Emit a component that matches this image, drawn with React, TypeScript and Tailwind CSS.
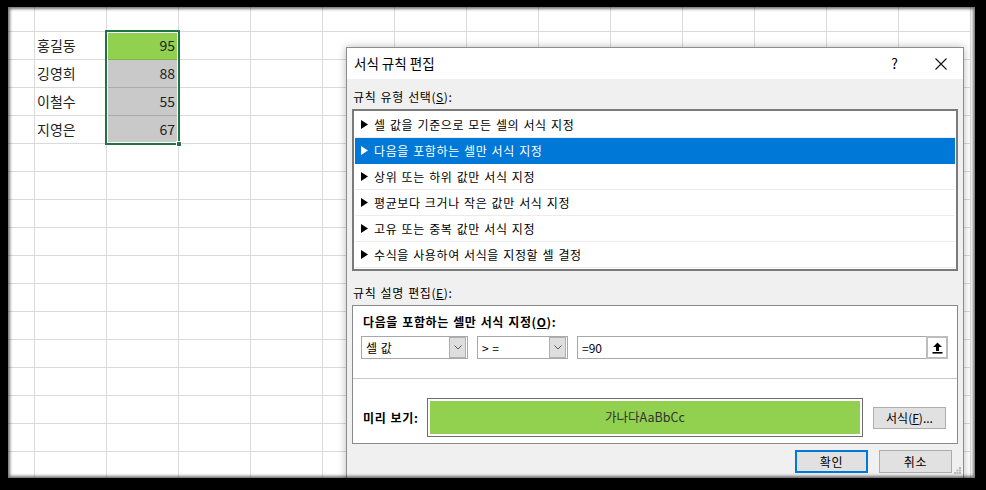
const ROWS = 17;
const COLS = 14;

const people = [
  { name: "홍길동", score: 95, hit: true },
  { name: "깅영희", score: 88, hit: false },
  { name: "이철수", score: 55, hit: false },
  { name: "지영은", score: 67, hit: false },
];

const ruleTypes = [
  "셀 값을 기준으로 모든 셀의 서식 지정",
  "다음을 포함하는 셀만 서식 지정",
  "상위 또는 하위 값만 서식 지정",
  "평균보다 크거나 작은 값만 서식 지정",
  "고유 또는 중복 값만 서식 지정",
  "수식을 사용하여 서식을 지정할 셀 결정",
];

function Chevron() {
  return (
    <svg width="8" height="5" viewBox="0 0 8 5">
      <path d="M0.5 0.5 L4 4 L7.5 0.5" fill="none" stroke="#5a5a5a" strokeWidth="1" />
    </svg>
  );
}

function Combo({ label, width }: { label: string; width: string }) {
  return (
    <div className={`${width} h-[23px] bg-white border border-[#a8a8a8] flex items-center`}>
      <span className="flex-1 pl-[4px] text-[12px] leading-none">{label}</span>
      <span className="w-[17px] h-[21px] mr-px bg-[#dedede] border border-[#b0b0b0] flex items-center justify-center">
        <Chevron />
      </span>
    </div>
  );
}

function Sheet() {
  const cells = [];
  for (let r = 0; r < ROWS; r++) {
    for (let c = 0; c < COLS; c++) {
      const p = r >= 1 && r <= 4 ? people[r - 1] : null;
      let content = null;
      let bg = "";
      if (p && c === 1) {
        content = <span className="pl-[2px]">{p.name}</span>;
      }
      if (p && c === 2) {
        content = <span className="ml-auto pr-[3px]">{p.score}</span>;
        bg = p.hit ? "bg-[#92d050] border-b-[#7fb443]" : "bg-[#c9c9c9] border-b-[#ababab]";
      }
      cells.push(
        <div
          key={r + "-" + c}
          className={`border-r border-b border-[#dadada] flex items-center text-[14px] text-[#222] ${bg}`}
        >
          {content}
        </div>
      );
    }
  }
  return (
    <div className="grid grid-cols-[27px_repeat(13,72px)] grid-rows-[25px_repeat(16,28px)]">
      {cells}
    </div>
  );
}

function Dialog() {
  return (
    <div className="absolute left-[338px] top-[40px] w-[618px] h-[460px] bg-[#f0f0f0] border border-[#8c8c8c] shadow-[0_0_8px_rgba(0,0,0,0.28)] text-black">
      <div className="h-[31px] bg-white flex items-center pl-[7px]">
        <span className="text-[13.5px]">서식 규칙 편집</span>
        <span className="ml-auto text-[14px] mr-[37px]">?</span>
        <svg width="12" height="12" viewBox="0 0 12 12" className="mr-[16px]">
          <path d="M0.5 0.5 L11.5 11.5 M11.5 0.5 L0.5 11.5" stroke="#111" strokeWidth="1.1" />
        </svg>
      </div>
      <div className="px-[5px] text-[12px] tracking-[0.6px] [word-spacing:1px]">
        <div className="mt-[10px] leading-[16px] pl-px">
          규칙 유형 선택(<span className="underline">S</span>):
        </div>
        <div className="mt-[4px] border-2 border-[#7a7a7a] bg-white p-px">
          {ruleTypes.map((t, i) => (
            <div
              key={t}
              className={`h-[26px] flex items-center pl-[6px] border-b ${
                i === 1 ? "bg-[#0078d7] text-white border-[#0078d7]" : "border-[#ececec]"
              }`}
            >
              <svg width="7" height="9" viewBox="0 0 7 9" className="mr-[6px]">
                <polygon points="0,0 7,4.5 0,9" fill={i === 1 ? "#fff" : "#000"} />
              </svg>
              <span>{t}</span>
            </div>
          ))}
        </div>
        <div className="mt-[14px] leading-[16px] pl-px">
          규칙 설명 편집(<span className="underline">E</span>):
        </div>
        <div className="mt-[4px] border border-[#8a8a8a] bg-white">
          <div className="pt-[8px] pl-[10px] leading-[16px] font-bold">
            다음을 포함하는 셀만 서식 지정(<span className="underline">O</span>):
          </div>
          <div className="mt-[6px] flex gap-[9px] pl-[8px] pr-[9px] tracking-normal">
            <Combo label="셀 값" width="w-[107px]" />
            <Combo label="> =" width="w-[91px]" />
            <div className="flex-1 h-[23px] bg-white border border-[#a8a8a8] flex items-center">
              <span className="flex-1 pl-[4px] leading-none">=90</span>
              <span className="w-[22px] h-[23px] -mr-px border-2 border-[#bdbdbd] bg-white flex items-center justify-center">
                <svg width="11" height="12" viewBox="0 0 11 12">
                  <path d="M5.5 0.5 L10 5 L7 5 L7 9 L4 9 L4 5 L1 5 Z" fill="#000" />
                  <rect x="0.5" y="10" width="10" height="1.6" fill="#000" />
                </svg>
              </span>
            </div>
          </div>
          <div className="mt-[19px] h-px bg-[#c8c8c8]" />
          <div className="mt-[19px] mb-[6px] flex items-center pl-[10px]">
            <span className="w-[64px] font-bold">미리 보기:</span>
            <div className="w-[436px] h-[39px] border border-[#6e6e6e] p-[2px] bg-white">
              <div className="h-full bg-[#92d050] flex items-center justify-center text-[12.5px] tracking-normal text-[#333]">
                가나다AaBbCc
              </div>
            </div>
            <button className="ml-[10px] w-[73px] h-[22px] bg-[#e1e1e1] border border-[#adadad] text-[12px] leading-none tracking-normal">
              서식(<span className="underline">F</span>)...
            </button>
          </div>
        </div>
        <div className="mt-[6px] flex justify-end gap-[11px] pr-[6px]">
          <button className="w-[73px] h-[23px] bg-[#e1e1e1] border-2 border-[#0078d7] text-[12px] leading-none">
            확인
          </button>
          <button className="w-[73px] h-[23px] bg-[#e1e1e1] border border-[#adadad] text-[12px] leading-none">
            취소
          </button>
        </div>
      </div>
      <svg width="7" height="7" viewBox="0 0 7 7" className="absolute right-[2px] top-[419px]">
        <rect x="5" y="0" width="2" height="2" fill="#b8b8b8" />
        <rect x="2.5" y="2.5" width="2" height="2" fill="#b8b8b8" />
        <rect x="5" y="2.5" width="2" height="2" fill="#b8b8b8" />
        <rect x="0" y="5" width="2" height="2" fill="#b8b8b8" />
        <rect x="2.5" y="5" width="2" height="2" fill="#b8b8b8" />
        <rect x="5" y="5" width="2" height="2" fill="#b8b8b8" />
      </svg>
    </div>
  );
}

export default function App() {
  return (
    <div className="w-[986px] h-[490px] bg-black pt-[7px] pl-[8px] pr-[11px] pb-[12px] [font-family:'Noto_Sans_CJK_KR','Noto_Sans',sans-serif]">
      <div className="relative w-full h-full bg-white overflow-hidden">
        <Sheet />
        <div className="absolute left-[97px] top-[23px] w-[75px] h-[115px] border-2 border-[#217346] shadow-[inset_0_0_0_1px_#fff]" />
        <div className="absolute left-[168px] top-[134px] w-[6px] h-[6px] bg-[#217346] border border-white" />
        <Dialog />
        <div className="absolute inset-0 pointer-events-none shadow-[inset_0_0_3px_2px_rgba(0,0,0,0.55)]" />
      </div>
    </div>
  );
}
